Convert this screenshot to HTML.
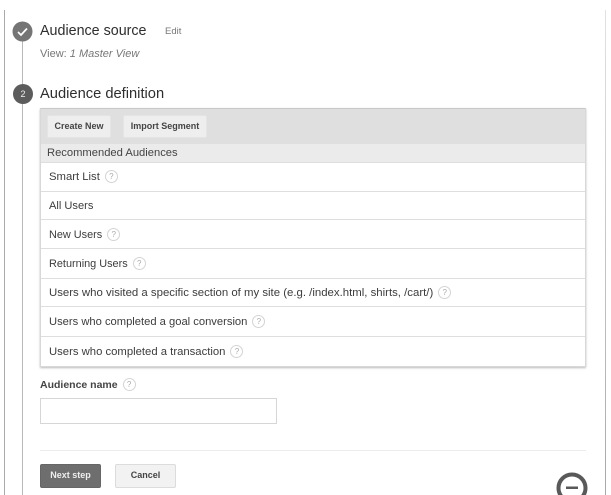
<!DOCTYPE html>
<html><head><meta charset="utf-8">
<style>
html,body{margin:0;padding:0;background:#fff}
body{width:611px;height:495px;position:relative;overflow:hidden;font-family:"Liberation Sans",sans-serif;color:#333;filter:blur(.35px)}
.a{position:absolute}
.t{position:absolute;white-space:nowrap;line-height:14px}
.row{position:absolute;left:49px;font-size:11.3px;color:#3c3c3c;white-space:nowrap;line-height:14px}
.b{position:absolute;left:41px;width:544px;height:1px;background:#dedede}
.q{display:inline-block;box-sizing:border-box;width:13px;height:13px;border:1px solid #d4d4d4;border-radius:50%;font-size:8px;font-weight:normal;line-height:11px;text-align:center;color:#aaa;vertical-align:top;margin-left:5px}
.btn{position:absolute;box-sizing:border-box;text-align:center;font-weight:bold;font-size:9px;color:#444;background:#eee;border:1px solid #e4e4e4;border-radius:2px}
</style></head><body>
<div class="a" style="left:4px;top:10px;width:1px;height:485px;background:#aaa"></div>
<div class="a" style="left:605px;top:10px;width:1px;height:485px;background:linear-gradient(#e2e2e2,#a8a8a8)"></div>
<div class="a" style="left:22px;top:31px;width:1px;height:464px;background:#b8b8b8"></div>

<svg class="a" style="left:12px;top:21px" width="21" height="21" viewBox="0 0 21 21"><circle cx="10.500" cy="10.500" r="10" fill="#757575"/><path d="M6 11l3 3 6-6.500" fill="none" stroke="#fff" stroke-width="1.700"/></svg>
<div class="t" style="left:40px;top:24px;font-size:14.300px;color:#2e2e2e">Audience source</div>
<div class="t" style="left:165px;top:25px;font-size:9.500px;color:#777">Edit</div>
<div class="t" style="left:40px;top:47px;font-size:11px;color:#777">View: <i>1 Master View</i></div>

<div class="a" style="left:13px;top:84px;width:20px;height:20px;border-radius:50%;background:#5c5c5c;color:#eee;font-size:9px;line-height:20px;text-align:center">2</div>
<div class="t" style="left:40px;top:87px;font-size:14.700px;color:#2e2e2e">Audience definition</div>

<div class="a" style="left:40px;top:108px;width:544px;height:257px;background:#fff;border:1px solid #d8d8d8;border-top-color:#c8c8c8;box-shadow:0 1px 2px #bbb"></div>
<div class="a" style="left:41px;top:109px;width:544px;height:35px;background:#dfdfdf"></div>
<div class="a" style="left:41px;top:144px;width:544px;height:18px;background:#ebebeb"></div>
<div class="btn" style="left:47px;top:115px;width:64px;height:23px;line-height:21px">Create New</div>
<div class="btn" style="left:123px;top:115px;width:84px;height:23px;line-height:21px">Import Segment</div>
<div class="t" style="left:47px;top:146px;font-size:11.200px;color:#444">Recommended Audiences</div>
<div class="b" style="top:162px"></div>
<div class="b" style="top:191px"></div>
<div class="b" style="top:219px"></div>
<div class="b" style="top:248px"></div>
<div class="b" style="top:278px"></div>
<div class="b" style="top:306px"></div>
<div class="b" style="top:336px"></div>

<div class="row" style="top:170px">Smart List<span class="q">?</span></div>
<div class="row" style="top:199px;font-size:11.100px">All Users</div>
<div class="row" style="top:228px;font-size:10.900px">New Users<span class="q">?</span></div>
<div class="row" style="top:257px;font-size:10.900px">Returning Users<span class="q">?</span></div>
<div class="row" style="top:286px;font-size:11.400px">Users who visited a specific section of my site (e.g. /index.html, shirts, /cart/)<span class="q">?</span></div>
<div class="row" style="top:315px;font-size:11.200px">Users who completed a goal conversion<span class="q">?</span></div>
<div class="row" style="top:345px">Users who completed a transaction<span class="q">?</span></div>

<div class="t" style="left:40px;top:378px;font-size:10.500px;font-weight:bold;color:#444">Audience name<span class="q">?</span></div>
<div class="a" style="left:40px;top:398px;width:235px;height:24px;border:1px solid #d6d6d6;background:#fff"></div>
<div class="a" style="left:40px;top:450px;width:546px;height:1px;background:#ececec"></div>
<div class="btn" style="left:40px;top:464px;width:61px;height:24px;line-height:21px;background:#6e6e6e;border-color:#666;color:#eee">Next step</div>
<div class="btn" style="left:115px;top:464px;width:61px;height:24px;line-height:21px;background:#f2f2f2;border-color:#dcdcdc">Cancel</div>

<svg class="a" style="left:555px;top:471px" width="34" height="24" viewBox="0 0 34 24"><circle cx="17" cy="17" r="13.500" fill="none" stroke="#595959" stroke-width="4"/><rect x="11" y="15.500" width="12" height="2.500" fill="#595959"/></svg>
</body></html>
